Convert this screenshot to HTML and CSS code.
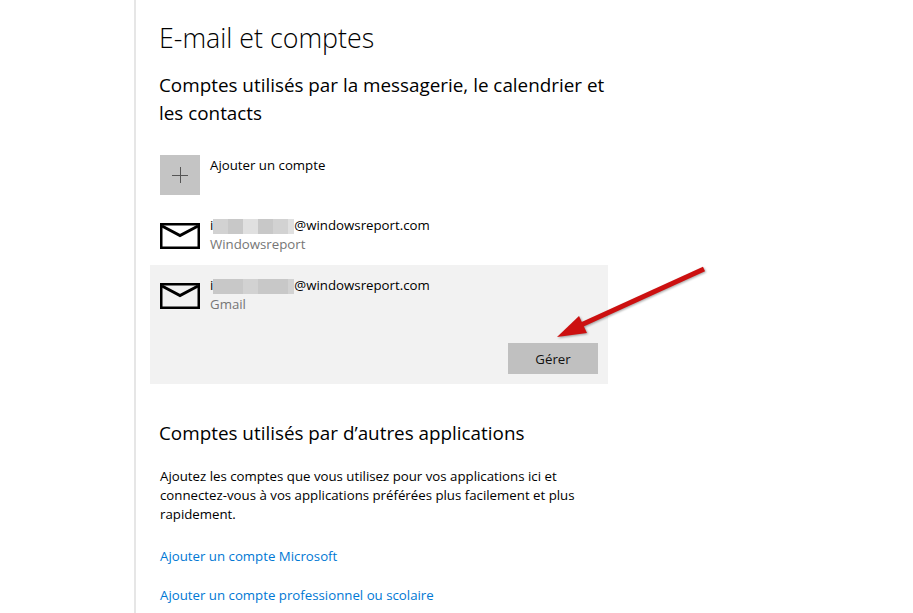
FILE: index.html
```html
<!DOCTYPE html>
<html lang="fr">
<head>
    <meta charset="UTF-8">
    <title>E-mail et comptes</title>
    <link rel="stylesheet" href="styles.css">
</head>
<body>
    <main class="page">
        <h1>E-mail et comptes</h1>
        <h2 class="first">Comptes utilisés par la messagerie, le calendrier et les contacts</h2>

        <div class="account add">
            <div class="tile">
                <svg width="16" height="16" viewBox="0 0 16 16"><path d="M8.5 0v16M0 8.5h16" stroke="#555" stroke-width="1" fill="none"/></svg>
            </div>
            <div class="info"><div class="name">Ajouter un compte</div></div>
        </div>

        <div class="account">
            <svg class="mail" width="40" height="26" viewBox="0 0 40 26"><path d="M1.25 1.25h37.5v23.5h-37.5z" stroke="#000" stroke-width="2.5" fill="none"/><path d="M2 3L20 12.5L38 3" stroke="#000" stroke-width="3" fill="none"/></svg>
            <div class="info">
                <div class="name">i<span class="blur"><i class="b1"></i><i class="b2"></i><i class="b3"></i><i class="b2"></i><i class="b1"></i><i class="end b3"></i></span>@windowsreport.com</div>
                <div class="sub">Windowsreport</div>
            </div>
        </div>

        <div class="account open">
            <div class="row">
                <svg class="mail" width="40" height="26" viewBox="0 0 40 26"><path d="M1.25 1.25h37.5v23.5h-37.5z" stroke="#000" stroke-width="2.5" fill="none"/><path d="M2 3L20 12.5L38 3" stroke="#000" stroke-width="3" fill="none"/></svg>
                <div class="info">
                    <div class="name">i<span class="blur"><i class="b2"></i><i class="b2"></i><i class="b1"></i><i class="b2"></i><i class="b2"></i><i class="end b1"></i></span>@windowsreport.com</div>
                    <div class="sub">Gmail</div>
                </div>
            </div>
            <div class="actions"><button>Gérer</button></div>
        </div>

        <h2 class="second">Comptes utilisés par d’autres applications</h2>
        <p>Ajoutez les comptes que vous utilisez pour vos applications ici et connectez-vous à vos applications préférées plus facilement et plus rapidement.</p>
        <a href="#" class="link">Ajouter un compte Microsoft</a>
        <a href="#" class="link">Ajouter un compte professionnel ou scolaire</a>
    </main>

    <svg class="arrow" width="160" height="80" viewBox="0 0 160 80">
        <path d="M153 3L30 59" stroke="#cc1010" stroke-width="5" fill="none"/>
        <path d="M6 71L28 50L36 67Z" fill="#cc1010"/>
    </svg>
</body>
</html>
```

FILE: styles.css
```css
* {
    box-sizing: border-box;
}
html, body {
    margin: 0;
    padding: 0;
    height: 100%;
    overflow: hidden;
    background: #fff;
}
body {
    font-family: "Open Sans", "Noto Sans", sans-serif;
    color: #000;
    position: relative;
}
.page {
    margin-left: 134px;
    width: 474px;
    height: 613px;
    border-left: 2px solid #e6e6e6;
    padding-left: 14px;
}
h1 {
    margin: 0;
    padding: 20px 0 0 9px;
    font-size: 26.8px;
    line-height: 36px;
    font-weight: 300;
}
h2 {
    margin: 0;
    padding-left: 9px;
    font-size: 18.85px;
    line-height: 28px;
    font-weight: 400;
}
h2.first {
    padding-top: 15px;
    width: 458px;
}
h2.second {
    padding-top: 35px;
}
.account {
    display: flex;
    padding: 0 10px;
}
.add {
    margin-top: 28px;
    height: 40px;
}
.add .info {
    padding-top: 1px;
}
.tile {
    width: 40px;
    height: 40px;
    background: #c4c4c4;
    display: flex;
    align-items: center;
    justify-content: center;
}
.info {
    margin-left: 10px;
    font-size: 13.25px;
    line-height: 19px;
}
.name {
    white-space: nowrap;
    display: flex;
    align-items: center;
}
.sub {
    color: #767676;
}
.mail {
    margin-top: 7px;
    flex: none;
}
.account:not(.add):not(.open) {
    margin-top: 21px;
    height: 49px;
}
.open {
    display: block;
    background: #f2f2f2;
    height: 119px;
    padding-top: 11px;
}
.row {
    display: flex;
}
.blur {
    display: inline-flex;
    width: 81px;
    height: 15px;
    margin-top: 1px;
}
.blur i {
    width: 15px;
}
.blur .end {
    width: 6px;
}
.b1 { background: #d2d2d2; }
.b2 { background: #c8c8c8; }
.b3 { background: #e0e0e0; }
.actions {
    display: flex;
    justify-content: flex-end;
    margin-top: 29px;
}
button {
    width: 90px;
    height: 31px;
    border: 0;
    background: #c0c0c0;
    font: 13.25px "Open Sans", "Noto Sans", sans-serif;
    color: #111;
    padding: 0;
}
p {
    margin: 0;
    padding: 20px 0 0 10px;
    font-size: 13.25px;
    line-height: 19px;
    width: 445px;
}
.link {
    display: block;
    margin-left: 10px;
    margin-top: 20px;
    font-size: 13.25px;
    line-height: 19px;
    color: #0078d4;
    text-decoration: none;
}
p + .link {
    margin-top: 23px;
}
.arrow {
    position: absolute;
    left: 551px;
    top: 266px;
    filter: drop-shadow(1px 1px 1px rgba(0, 0, 0, .35));
}
```
